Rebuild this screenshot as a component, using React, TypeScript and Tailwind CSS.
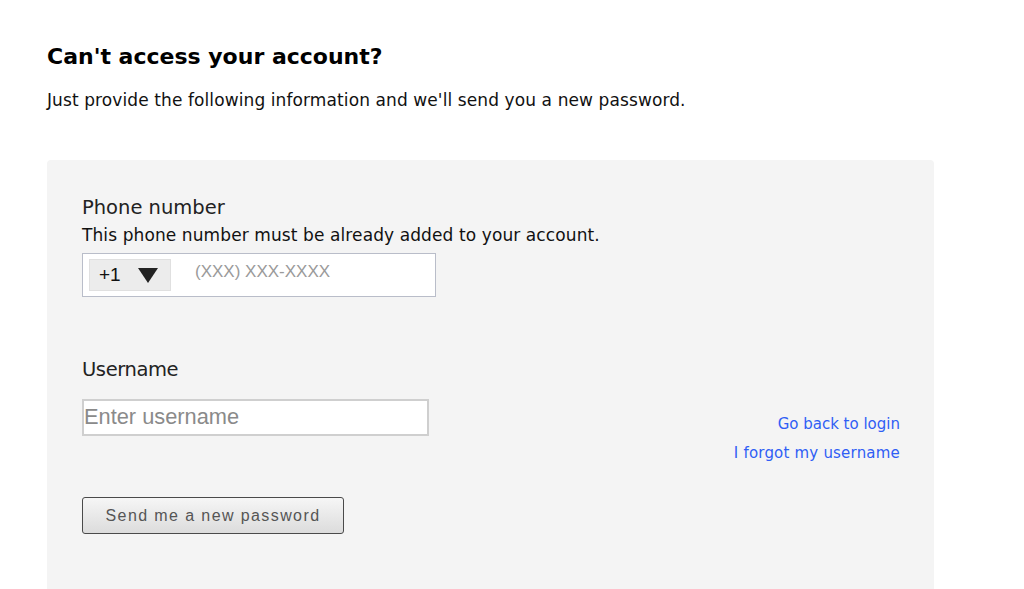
import React from "react";

export default function App() {
  return (
    <div className="w-[1024px] h-[589px] overflow-hidden bg-white font-['DejaVu_Sans',Verdana,sans-serif]">
      <div className="pl-[47px] pt-[42px]">
        <h1 className="text-[22px] leading-[30px] font-bold text-black tracking-[0px]">Can't access your account?</h1>
        <p className="mt-[17px] text-[17px] leading-[22px] text-[#111] tracking-[0.1px]">
          Just provide the following information and we'll send you a new password.
        </p>
        <div className="mt-[49px] w-[887px] h-[440px] rounded-t-[4px] bg-[#f4f4f4] flex justify-between pl-[35px] pr-[34px] pt-[36px]">
          <div className="flex flex-col">
            <label className="text-[19.5px] leading-[24px] text-[#222]">Phone number</label>
            <p className="mt-[4px] text-[17px] leading-[22px] text-[#111] tracking-[0.1px]">This phone number must be already added to your account.</p>
            <div className="mt-[7px] w-[354px] h-[44px] border border-[#b9bdc9] bg-white flex items-center pl-[6px]">
              <div className="w-[82px] h-[32px] bg-[#ececec] border border-[#e0e0e0] flex items-center pl-[9px] gap-[17px]">
                <span className="font-['Liberation_Sans',Arial,sans-serif] text-[19px] text-[#111]">+1</span>
                <svg width="20" height="15" viewBox="0 0 20 15"><path d="M0 0 L20 0 L10 15 Z" fill="#222" /></svg>
              </div>
              <span className="ml-[24px] -mt-[6px] font-['Liberation_Sans',Arial,sans-serif] text-[17px] text-[#9a9a9a]">(XXX) XXX-XXXX</span>
            </div>
            <label className="mt-[61px] text-[19.5px] leading-[24px] text-[#222] tracking-[-0.4px]">Username</label>
            <div className="mt-[17px] w-[347px] h-[37px] border-2 border-[#cfcfcf] bg-white flex items-center">
              <span className="font-['Liberation_Sans',Arial,sans-serif] text-[21.8px] text-[#8a8a8a]">Enter username</span>
            </div>
            <button className="mt-[61px] w-[262px] h-[37px] rounded-[3px] border border-[#4a4a4a] bg-gradient-to-b from-[#f6f6f6] to-[#dcdcdc] font-['Liberation_Sans',Arial,sans-serif] text-[16px] tracking-[1.4px] text-[#555] flex items-center justify-center">
              Send me a new password
            </button>
          </div>
          <div className="flex flex-col items-end pt-[214px] text-[15px] leading-[29px] text-[#2f5ef5]">
            <a>Go back to login</a>
            <a className="tracking-[0.2px]">I forgot my username</a>
          </div>
        </div>
      </div>
    </div>
  );
}
